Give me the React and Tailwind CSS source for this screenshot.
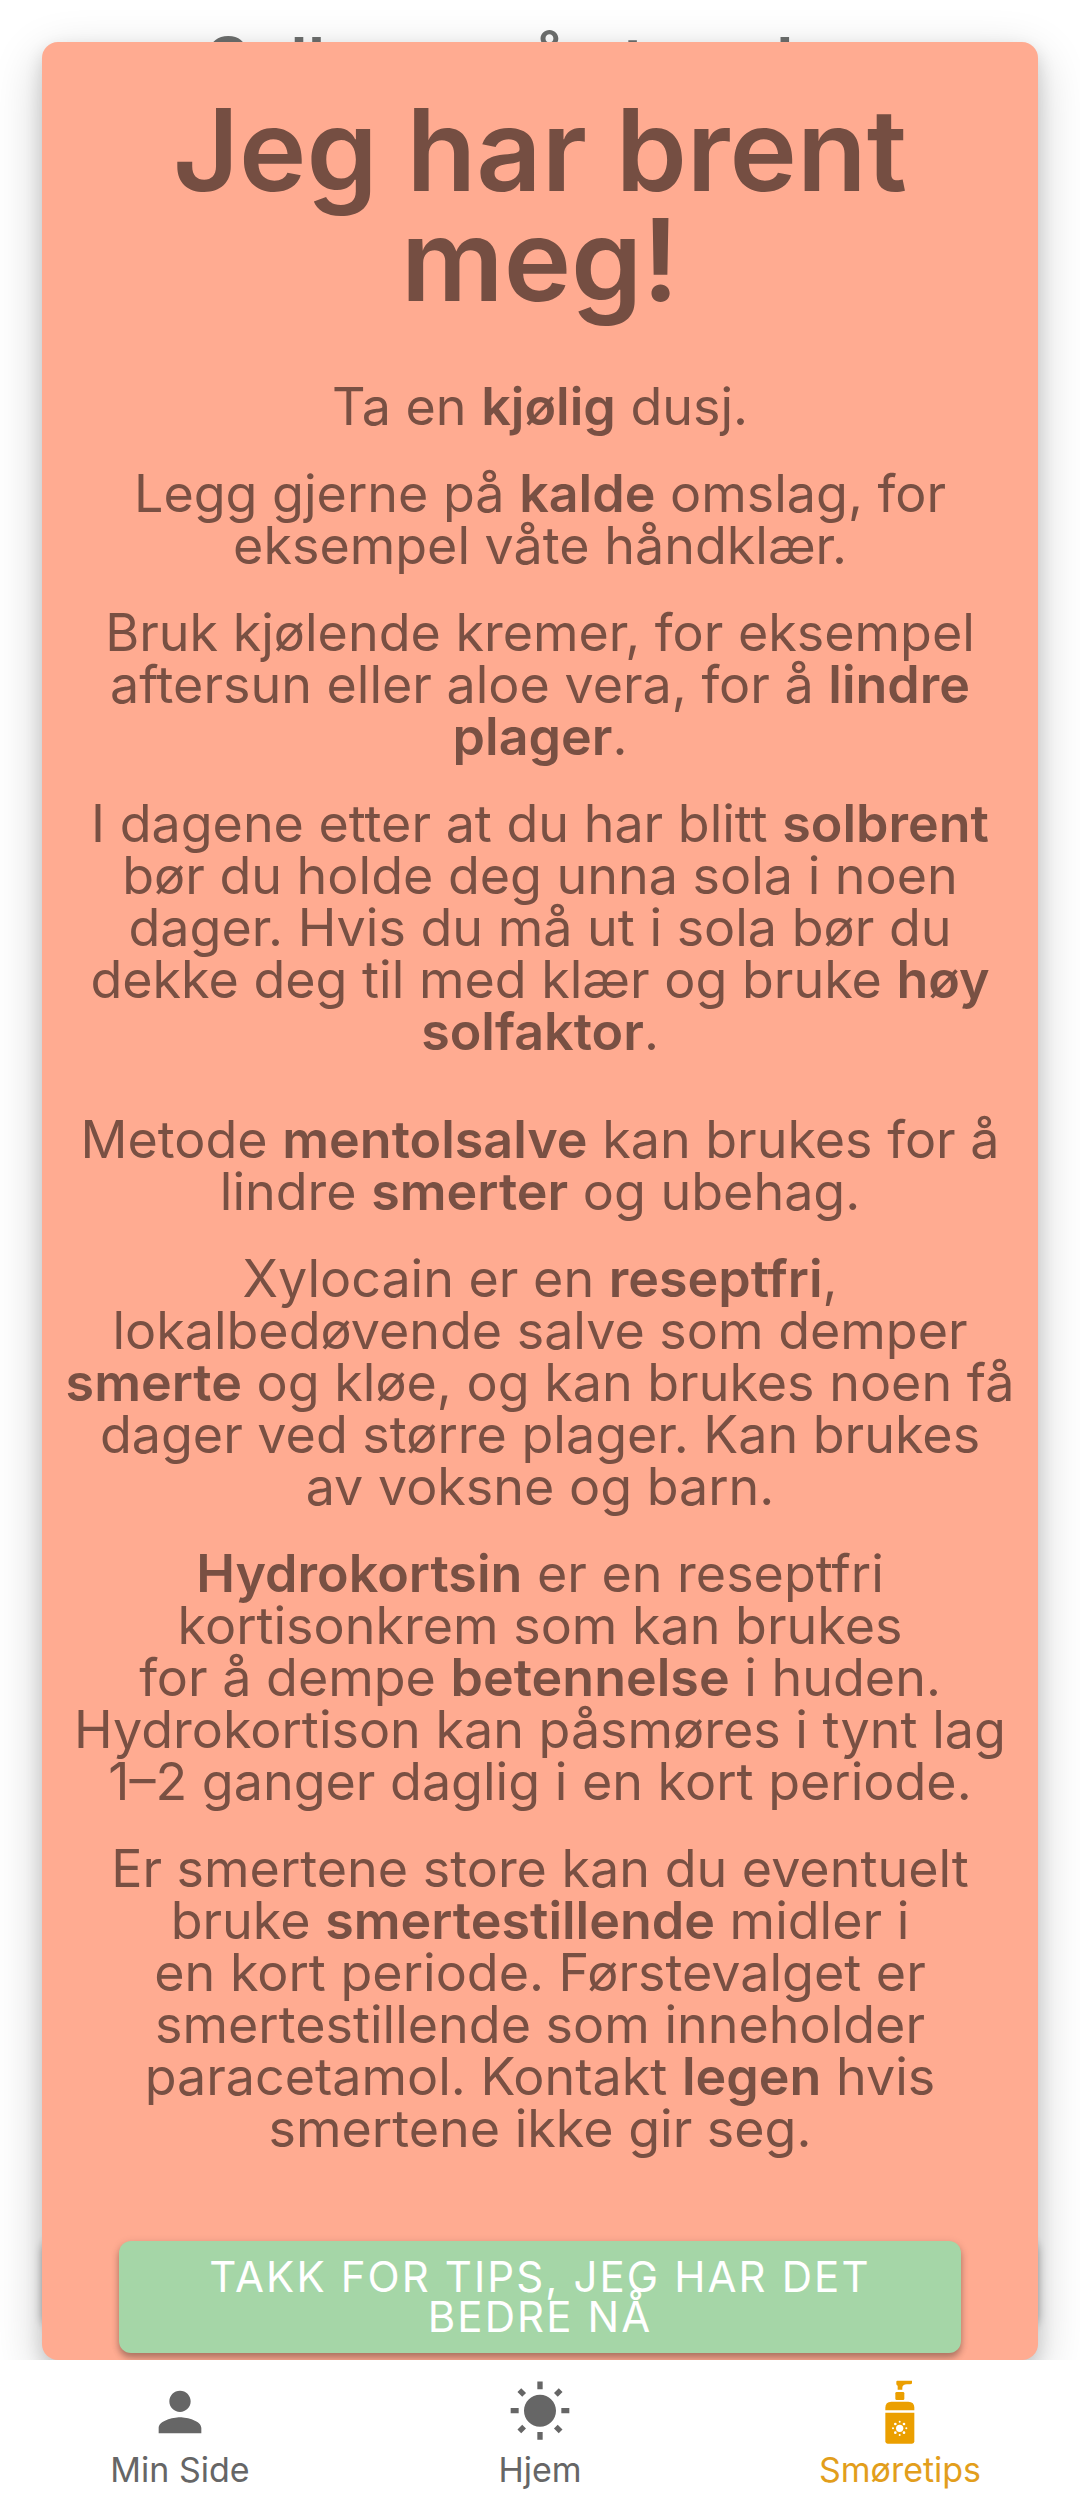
const advice = [
  <>Ta en <b className="font-semibold">kjølig</b> dusj.</>,
  <>
    Legg gjerne på <b className="font-semibold">kalde</b> omslag, for<br />
    eksempel våte håndklær.
  </>,
  <>
    Bruk kjølende kremer, for eksempel<br />
    aftersun eller aloe vera, for å <b className="font-semibold">lindre<br />
    plager</b>.
  </>,
  <>
    I dagene etter at du har blitt <b className="font-semibold">solbrent</b><br />
    bør du holde deg unna sola i noen<br />
    dager. Hvis du må ut i sola bør du<br />
    dekke deg til med klær og bruke <b className="font-semibold">høy<br />
    solfaktor</b>.
  </>,
];

const remedies = [
  <>
    Metode <b className="font-semibold">mentolsalve</b> kan brukes for å<br />
    lindre <b className="font-semibold">smerter</b> og ubehag.
  </>,
  <>
    Xylocain er en <b className="font-semibold">reseptfri</b>,<br />
    lokalbedøvende salve som demper<br />
    <b className="font-semibold">smerte</b> og kløe, og kan brukes noen få<br />
    dager ved større plager. Kan brukes<br />
    av voksne og barn.
  </>,
  <>
    <b className="font-semibold">Hydrokortsin</b> er en reseptfri<br />
    kortisonkrem som kan brukes<br />
    for å dempe <b className="font-semibold">betennelse</b> i huden.<br />
    Hydrokortison kan påsmøres i tynt lag<br />
    1–2 ganger daglig i en kort periode.
  </>,
  <>
    Er smertene store kan du eventuelt<br />
    bruke <b className="font-semibold">smertestillende</b> midler i<br />
    en kort periode. Førstevalget er<br />
    smertestillende som inneholder<br />
    paracetamol. Kontakt <b className="font-semibold">legen</b> hvis<br />
    smertene ikke gir seg.
  </>,
];

function Paragraphs({ items }) {
  return (
    <div className="flex flex-col gap-[35px]">
      {items.map((item, i) => (
        <p key={i}>{item}</p>
      ))}
    </div>
  );
}

function PersonIcon() {
  return (
    <svg viewBox="0 0 24 24" className="size-16 fill-current" aria-hidden="true">
      <path d="M12 12c2.21 0 4-1.79 4-4s-1.79-4-4-4-4 1.79-4 4 1.79 4 4 4zm0 2c-2.67 0-8 1.34-8 4v2h16v-2c0-2.66-5.33-4-8-4z" />
    </svg>
  );
}

function SunIcon() {
  return (
    <svg viewBox="0 0 24 24" className="size-16 fill-current" aria-hidden="true">
      <path d="M6.76 4.84l-1.8-1.79-1.41 1.41 1.79 1.79 1.42-1.41zM4 10.5H1v2h3v-2zm9-9.95h-2V3.5h2V.55zm7.45 3.91l-1.41-1.41-1.79 1.79 1.41 1.41 1.79-1.79zm-3.21 13.7l1.79 1.8 1.41-1.41-1.8-1.79-1.4 1.4zM20 10.5v2h3v-2h-3zm-8-5c-3.31 0-6 2.69-6 6s2.69 6 6 6 6-2.69 6-6-2.69-6-6-6zm-1 16.95h2V19.5h-2v2.95zm-7.45-3.91l1.41 1.41 1.79-1.8-1.41-1.41-1.79 1.8z" />
    </svg>
  );
}

function BottleIcon() {
  return (
    <svg viewBox="0 0 192 192" className="size-16 fill-[#eb9f00]" aria-hidden="true">
      <path d="M85 5q0-3 3-3h44v7q0 4-6 4h-9q-14 1-14 10v6H89V17q-4-1-4-5z" />
      <rect x="82" y="36" width="27" height="24" rx="4" />
      <path d="M52 91V83q0-18 18-18h51q18 0 18 18v8z" />
      <path d="M52 98h87v86q0 7-7 7H59q-7 0-7-7z" />
      <g className="fill-white">
        <circle cx="95" cy="145" r="11" />
        <circle cx="95" cy="125" r="3" />
        <circle cx="95" cy="165" r="3" />
        <circle cx="75" cy="145" r="3" />
        <circle cx="115" cy="145" r="3" />
        <circle cx="82" cy="132" r="4" />
        <circle cx="108" cy="132" r="4" />
        <circle cx="82" cy="158" r="4" />
        <circle cx="108" cy="158" r="4" />
      </g>
    </svg>
  );
}

function NavItem({ icon, label, active }) {
  return (
    <a
      href="#"
      aria-current={active ? "page" : undefined}
      className={`flex flex-1 flex-col items-center text-[34px] leading-10 ${active ? "text-[#e29e1c]" : "text-[#666666]"}`}
    >
      {icon}
      <span className="mt-1.5">{label}</span>
    </a>
  );
}

export default function App() {
  return (
    <div className="flex min-h-screen flex-col bg-white font-['Inter',sans-serif]">
      <header className="h-[42px] overflow-hidden pt-7 text-center">
        <h2 className="text-[67px] leading-[67px] font-semibold text-[#6e706f]">Solkrem på stranden</h2>
      </header>

      <div className="relative isolate mx-[42px]">
        <div className="absolute inset-x-0 bottom-8 -z-10 h-[88px] rounded-xl shadow-[0_0_8px_rgba(0,0,0,0.3)]" />
        <section className="rounded-2xl bg-[#ffab91] px-2 pt-[53px] pb-[7px] text-center text-[52px] leading-[52px] text-[#795043] shadow-[0_8px_18px_rgba(0,0,0,0.14),0_16px_50px_rgba(0,0,0,0.2)]">
          <h1 className="mb-[66px] text-[114px] leading-[110px] font-semibold text-[#754e42]">
            Jeg har brent<br />meg!
          </h1>
          <Paragraphs items={advice} />
          <div className="mt-14">
            <Paragraphs items={remedies} />
          </div>
          <button
            type="button"
            className="mx-auto mt-[86px] block w-[86%] rounded-xl bg-[#a5d6a7] px-10 py-4 text-[42px] leading-10 tracking-wider text-white uppercase shadow-[0_5px_6px_rgba(0,0,0,0.25),0_2px_10px_rgba(0,0,0,0.12)]"
          >
            Takk for tips, jeg har det<br />bedre nå
          </button>
        </section>
      </div>

      <nav className="relative flex bg-white pt-5 pb-4">
        <NavItem icon={<PersonIcon />} label="Min Side" />
        <NavItem icon={<SunIcon />} label="Hjem" />
        <NavItem icon={<BottleIcon />} label="Smøretips" active />
      </nav>
    </div>
  );
}
